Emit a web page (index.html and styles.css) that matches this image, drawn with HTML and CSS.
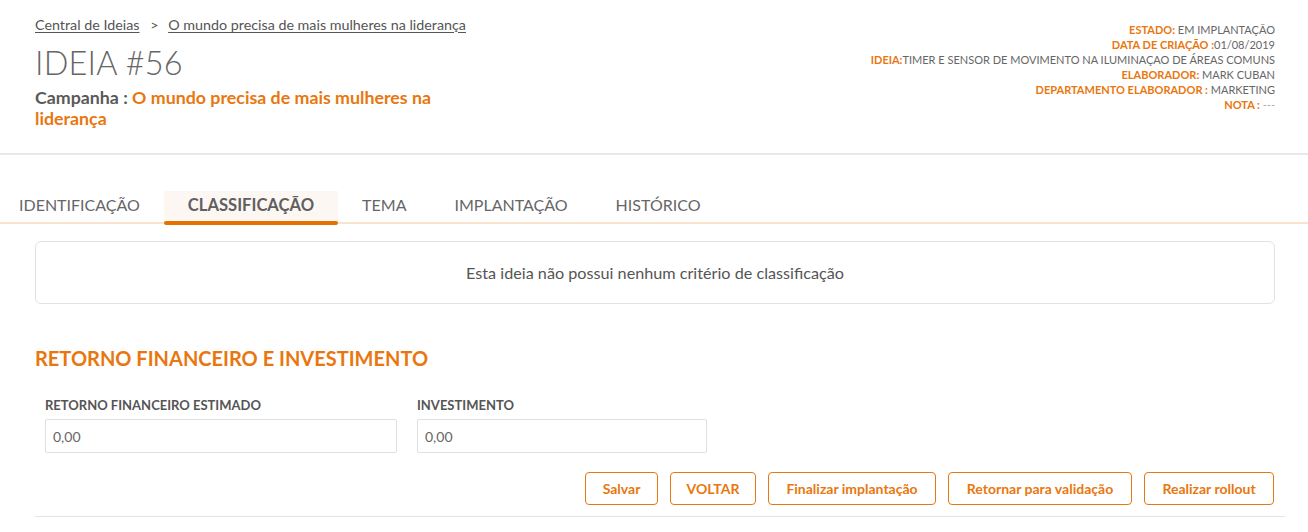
FILE: index.html
```html
<!DOCTYPE html>
<html lang="pt-BR">
<head>
<meta charset="utf-8">
<title>Ideia #56</title>
<link rel="stylesheet" href="styles.css">
</head>
<body>
<header class="page-header">
  <div class="header-left">
    <nav class="breadcrumb">
      <a href="#">Central de Ideias</a>
      <span class="sep">&gt;</span>
      <a href="#">O mundo precisa de mais mulheres na liderança</a>
    </nav>
    <h1 class="title">IDEIA #56</h1>
    <p class="campaign"><span class="campaign-label">Campanha : </span><span class="campaign-name">O mundo precisa de mais mulheres na liderança</span></p>
  </div>
  <dl class="info">
    <div class="info-row"><dt>ESTADO:</dt><dd>&nbsp;EM IMPLANTAÇÃO</dd></div>
    <div class="info-row"><dt>DATA DE CRIAÇÃO :</dt><dd>01/08/2019</dd></div>
    <div class="info-row"><dt>IDEIA:</dt><dd>TIMER E SENSOR DE MOVIMENTO NA ILUMINAÇAO DE ÁREAS COMUNS</dd></div>
    <div class="info-row"><dt>ELABORADOR:</dt><dd>&nbsp;MARK CUBAN</dd></div>
    <div class="info-row"><dt>DEPARTAMENTO ELABORADOR :</dt><dd>&nbsp;MARKETING</dd></div>
    <div class="info-row"><dt>NOTA :</dt><dd class="muted">&nbsp;---</dd></div>
  </dl>
</header>

<nav class="tabs">
  <a class="tab first" href="#">IDENTIFICAÇÃO</a>
  <a class="tab active" href="#">CLASSIFICAÇÃO</a>
  <a class="tab" href="#">TEMA</a>
  <a class="tab" href="#">IMPLANTAÇÃO</a>
  <a class="tab" href="#">HISTÓRICO</a>
</nav>

<main class="content">
  <div class="empty-box">Esta ideia não possui nenhum critério de classificação</div>

  <h2 class="section-title">RETORNO FINANCEIRO E INVESTIMENTO</h2>

  <div class="fields">
    <div class="field field-wide">
      <label class="field-label">RETORNO FINANCEIRO ESTIMADO</label>
      <input class="field-input" type="text" value="0,00">
    </div>
    <div class="field field-narrow">
      <label class="field-label">INVESTIMENTO</label>
      <input class="field-input" type="text" value="0,00">
    </div>
  </div>

  <div class="actions">
    <button class="btn btn-salvar">Salvar</button>
    <button class="btn btn-voltar">VOLTAR</button>
    <button class="btn btn-finalizar">Finalizar implantação</button>
    <button class="btn btn-retornar">Retornar para validação</button>
    <button class="btn btn-rollout">Realizar rollout</button>
  </div>
  <div class="bottom-rule"></div>
</main>
</body>
</html>
```

FILE: styles.css
```css
* { box-sizing: border-box; }

html, body {
  margin: 0;
  padding: 0;
  background: #fff;
}

body {
  font-family: "Lato", "Noto Sans", sans-serif;
  color: #555;
  width: 1308px;
  height: 532px;
  overflow: hidden;
}

/* Header */
.page-header {
  display: flex;
  justify-content: space-between;
  align-items: flex-start;
  padding: 15px 33px 0 35px;
  height: 155px;
  border-bottom: 2px solid #e8e8e8;
}

.header-left {
  width: 440px;
}

.breadcrumb {
  font-size: 14.3px;
  line-height: 20px;
  color: #555;
  white-space: nowrap;
}

.breadcrumb a {
  color: #555;
  text-decoration: underline;
  text-underline-offset: 2px;
}

.breadcrumb .sep {
  margin: 0 6px 0 7px;
}

.title {
  margin: 8px 0 0 0;
  font-size: 32.5px;
  line-height: 40px;
  font-weight: 300;
  color: #666;
  letter-spacing: 0.2px;
}

.campaign {
  margin: 4px 0 0 0;
  font-size: 17.8px;
  line-height: 21px;
  font-weight: 700;
}

.campaign-label { color: #5a5a5a; }
.campaign-name { color: #e8770f; }

.info {
  margin: 7px 0 0 0;
  font-size: 11px;
  line-height: 15px;
  text-align: right;
}

.info-row {
  display: flex;
  justify-content: flex-end;
}

.info dt {
  font-weight: 700;
  color: #e8770f;
}

.info dd {
  margin: 0;
  color: #666;
  white-space: pre;
}

.info dd.muted { color: #aaa; }

/* Tabs */
.tabs {
  display: flex;
  margin-top: 36px;
  border-bottom: 2px solid #f8e3cc;
  height: 33px;
}

.tab {
  position: relative;
  display: block;
  padding: 0 24px;
  height: 31px;
  line-height: 28px;
  font-size: 16px;
  color: #666;
  text-decoration: none;
  white-space: nowrap;
}

.tab.first { padding-left: 19px; }

.tab.active {
  background: #fcf7f3;
  font-weight: 700;
  font-size: 16.6px;
  color: #5f5f5f;
}

.tab.active::after {
  content: "";
  position: absolute;
  left: 0;
  right: 0;
  bottom: -3px;
  height: 4px;
  border-radius: 2px;
  background: #e57200;
}

/* Content */
.content {
  padding: 0 33px 0 35px;
}

.empty-box {
  margin-top: 17px;
  height: 63px;
  border: 1px solid #e2e2e2;
  border-radius: 6px;
  display: flex;
  align-items: center;
  justify-content: center;
  font-size: 16.2px;
  color: #555;
}

.section-title {
  margin: 42px 0 0 0;
  font-size: 20px;
  line-height: 24px;
  font-weight: 700;
  color: #e8770f;
}

.fields {
  display: flex;
  gap: 20px;
  margin-top: 26px;
  padding-left: 10px;
}

.field {
  display: flex;
  flex-direction: column;
}

.field-wide { width: 352px; }
.field-narrow { width: 290px; }

.field-label {
  font-size: 13px;
  line-height: 18px;
  font-weight: 700;
  color: #555;
}

.field-input {
  margin-top: 5px;
  height: 34px;
  border: 1px solid #e0e0e0;
  border-radius: 2px;
  padding: 0 7px;
  font-family: inherit;
  font-size: 14px;
  color: #666;
  outline: none;
}

.actions {
  display: flex;
  justify-content: flex-end;
  gap: 12px;
  margin-top: 19px;
  padding-right: 1px;
}

.btn {
  height: 33px;
  padding: 0;
  border: 1px solid #e8770f;
  border-radius: 4px;
  background: #fff;
  color: #e8770f;
  font-family: inherit;
  font-size: 14px;
  font-weight: 700;
  white-space: nowrap;
  cursor: pointer;
}

.btn-salvar { width: 73px; }
.btn-voltar { width: 86px; }
.btn-finalizar { width: 168px; }
.btn-retornar { width: 184px; }
.btn-rollout { width: 130px; }

.bottom-rule {
  margin-top: 11px;
  margin-right: -10px;
  height: 1px;
  background: #e2e2e2;
}
```
